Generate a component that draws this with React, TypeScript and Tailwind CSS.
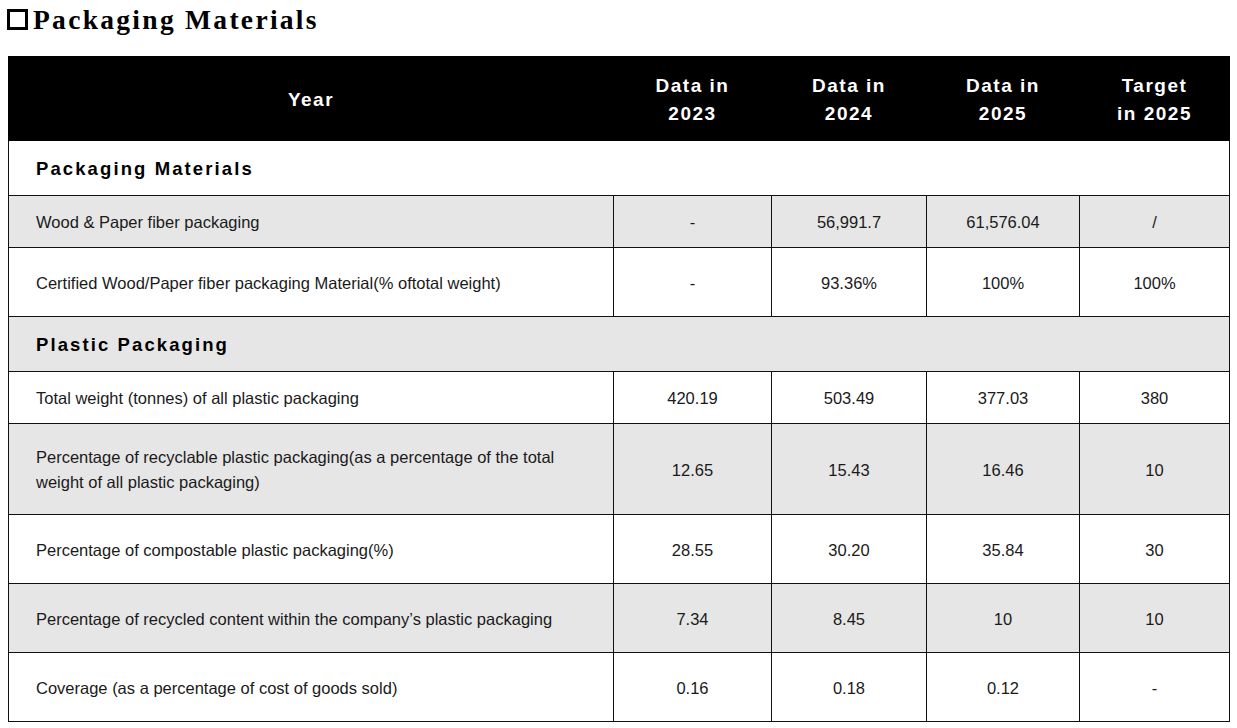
import React from 'react';

type Row = {
  label: string;
  values: string[];
  gray?: boolean;
  h: string;
};

const packagingRows: Row[] = [
  { label: 'Wood & Paper fiber packaging', values: ['-', '56,991.7', '61,576.04', '/'], gray: true, h: 'h-[52px]' },
  { label: 'Certified Wood/Paper fiber packaging Material(% oftotal weight)', values: ['-', '93.36%', '100%', '100%'], h: 'h-[69px]' },
];

const plasticRows: Row[] = [
  { label: 'Total weight (tonnes) of all plastic packaging', values: ['420.19', '503.49', '377.03', '380'], h: 'h-[52px]' },
  {
    label: 'Percentage of recyclable plastic packaging(as a percentage of the total weight of all plastic packaging)',
    values: ['12.65', '15.43', '16.46', '10'],
    gray: true,
    h: 'h-[91px]',
  },
  { label: 'Percentage of compostable plastic packaging(%)', values: ['28.55', '30.20', '35.84', '30'], h: 'h-[69px]' },
  {
    label: 'Percentage of recycled content within the company\u2019s plastic packaging',
    values: ['7.34', '8.45', '10', '10'],
    gray: true,
    h: 'h-[69px]',
  },
  { label: 'Coverage (as a percentage of cost of goods sold)', values: ['0.16', '0.18', '0.12', '-'], h: 'h-[69px]' },
];

const DataRow = ({ row }: { row: Row }) => (
  <tr className={`${row.h} ${row.gray ? 'bg-[#e6e6e6]' : 'bg-white'}`}>
    <td className="border border-[#111] pl-[27px] pr-12 pt-[2px] text-left leading-[25px]">{row.label}</td>
    {row.values.map((v, i) => (
      <td key={i} className="border border-[#111] pt-[2px] text-center">
        {v}
      </td>
    ))}
  </tr>
);

const SectionRow = ({ title, gray, h }: { title: string; gray?: boolean; h: string }) => (
  <tr className={`${h} ${gray ? 'bg-[#e6e6e6]' : 'bg-white'}`}>
    <td colSpan={5} className="border border-[#111] pl-[27px] pt-[2px] text-left text-[18.5px] font-bold tracking-[2.1px] text-black">
      {title}
    </td>
  </tr>
);

export default function App() {
  return (
    <div className="bg-white min-h-screen font-['Liberation_Sans',Arial,sans-serif] text-[#1a1a1a]">
      <h1 className="flex items-start px-[7px] pt-[3px] h-[56px] font-['Liberation_Serif','Times_New_Roman',serif] text-[27.5px] font-bold tracking-[2.3px] text-black leading-[34px]">
        <span className="inline-block mt-[6px] mr-[5px] w-[21px] h-[21px] border-[3px] border-black shrink-0" />
        Packaging Materials
      </h1>
      <table className="mx-[8px] w-[1221px] border-collapse table-fixed text-[16.5px]">
        <colgroup>
          <col className="w-[605px]" />
          <col className="w-[158px]" />
          <col className="w-[155px]" />
          <col className="w-[153px]" />
          <col className="w-[150px]" />
        </colgroup>
        <thead>
          <tr className="h-[84px] bg-black text-white text-[19px] font-bold tracking-[1.5px] leading-[28px]">
            <th className="border border-black pt-[2px]">Year</th>
            <th className="border border-black pt-[2px]">
              Data in
              <br />
              2023
            </th>
            <th className="border border-black pt-[2px]">
              Data in
              <br />
              2024
            </th>
            <th className="border border-black pt-[2px]">
              Data in
              <br />
              2025
            </th>
            <th className="border border-black pt-[2px]">
              Target
              <br />
              in 2025
            </th>
          </tr>
        </thead>
        <tbody>
          <SectionRow title="Packaging Materials" h="h-[55px]" />
          {packagingRows.map((r) => (
            <DataRow key={r.label} row={r} />
          ))}
          <SectionRow title="Plastic Packaging" gray h="h-[55px]" />
          {plasticRows.map((r) => (
            <DataRow key={r.label} row={r} />
          ))}
        </tbody>
      </table>
    </div>
  );
}
